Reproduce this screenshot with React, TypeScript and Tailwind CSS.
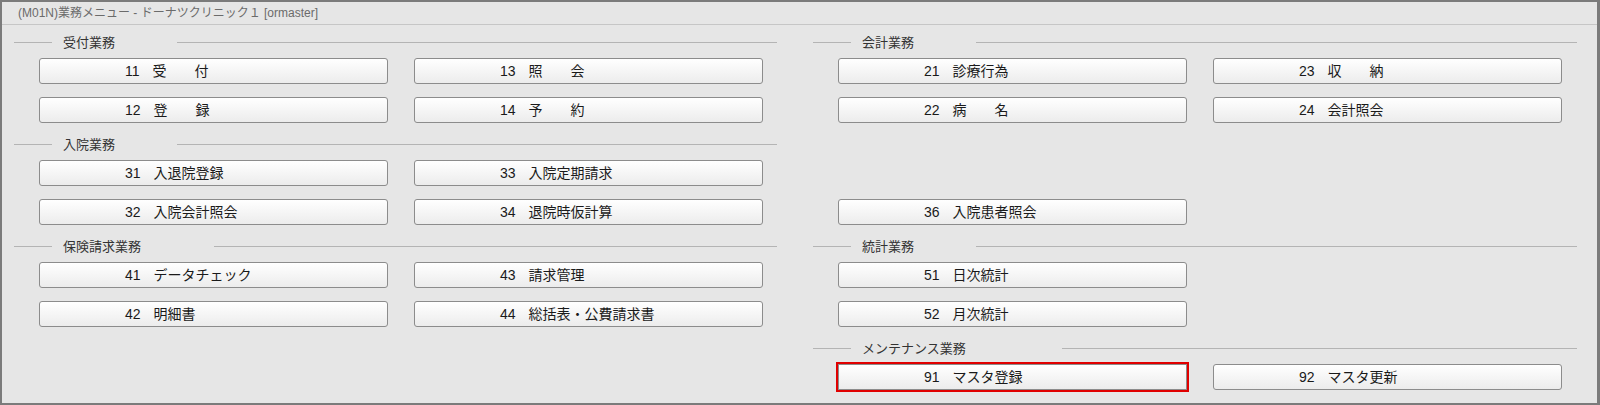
import React from "react";

type Item = { no: string; label: string; active?: boolean } | null;

type Section = {
  title?: string;
  gap?: number;
  rows: [Item, Item][];
};

const left: Section[] = [
  {
    title: "受付業務",
    gap: 125,
    rows: [
      [{ no: "11", label: "受　　付" }, { no: "13", label: "照　　会" }],
      [{ no: "12", label: "登　　録" }, { no: "14", label: "予　　約" }],
    ],
  },
  {
    title: "入院業務",
    gap: 125,
    rows: [
      [{ no: "31", label: "入退院登録" }, { no: "33", label: "入院定期請求" }],
      [{ no: "32", label: "入院会計照会" }, { no: "34", label: "退院時仮計算" }],
    ],
  },
  {
    title: "保険請求業務",
    gap: 162,
    rows: [
      [{ no: "41", label: "データチェック" }, { no: "43", label: "請求管理" }],
      [{ no: "42", label: "明細書" }, { no: "44", label: "総括表・公費請求書" }],
    ],
  },
];

const right: Section[] = [
  {
    title: "会計業務",
    gap: 125,
    rows: [
      [{ no: "21", label: "診療行為" }, { no: "23", label: "収　　納" }],
      [{ no: "22", label: "病　　名" }, { no: "24", label: "会計照会" }],
    ],
  },
  {
    rows: [
      [null, null],
      [{ no: "36", label: "入院患者照会" }, null],
    ],
  },
  {
    title: "統計業務",
    gap: 125,
    rows: [
      [{ no: "51", label: "日次統計" }, null],
      [{ no: "52", label: "月次統計" }, null],
    ],
  },
  {
    title: "メンテナンス業務",
    gap: 211,
    rows: [[{ no: "91", label: "マスタ登録", active: true }, { no: "92", label: "マスタ更新" }]],
  },
];

function MenuButton({ item }: { item: Item }) {
  if (!item) return <div className="h-[26px] w-[349px]" />;
  return (
    <button
      type="button"
      className={`flex h-[26px] w-[349px] items-center border border-[#8c8c8c] bg-gradient-to-b from-[#ffffff] to-[#ececec] pl-[85px] text-[14px] leading-none text-[#1a1a1a] ${
        item.active
          ? "rounded-none outline-2 outline-[#e00000]"
          : "rounded-[3px]"
      }`}
    >
      <span className="mr-[13px]">{item.no}</span>
      <span>{item.label}</span>
    </button>
  );
}

function SectionHeader({ title, gap }: { title?: string; gap?: number }) {
  if (!title) return <div className="h-[20px]" />;
  return (
    <div className="flex h-[20px] items-center">
      <div className="h-px w-[38px] bg-[#b4b4b4]" />
      <div
        className="shrink-0 pl-[11px] text-[13px] leading-none text-[#333]"
        style={{ width: gap }}
      >
        {title}
      </div>
      <div className="h-px flex-1 bg-[#b4b4b4]" />
    </div>
  );
}

function SectionBlock({ section }: { section: Section }) {
  return (
    <div className="pb-[11px]">
      <SectionHeader title={section.title} gap={section.gap} />
      <div className="mt-[6px] flex flex-col gap-[13px] pl-[25px] pr-[14px]">
        {section.rows.map((row, i) => (
          <div key={i} className="flex gap-[26px]">
            <MenuButton item={row[0]} />
            <MenuButton item={row[1]} />
          </div>
        ))}
      </div>
    </div>
  );
}

export default function App() {
  return (
    <div
      className="h-[405px] w-[1600px] overflow-hidden border-2 border-r-[3px] border-[#7b7b7b] bg-[#e6e6e6]"
      style={{ fontFamily: '"Liberation Sans", Arial, "Noto Sans CJK JP", sans-serif' }}
    >
      <div className="flex h-[23px] items-center border-b border-[#c6c6c6] pl-[16px] text-[12px] text-[#6b6b6b]">
        (M01N)業務メニュー - ドーナツクリニック１ [ormaster]
      </div>
      <div className="flex gap-[36px] pl-[12px] pr-[20px] pt-[7px]">
        <div className="w-[763px]">
          {left.map((s, i) => (
            <SectionBlock key={i} section={s} />
          ))}
        </div>
        <div className="w-[764px]">
          {right.map((s, i) => (
            <SectionBlock key={i} section={s} />
          ))}
        </div>
      </div>
    </div>
  );
}
